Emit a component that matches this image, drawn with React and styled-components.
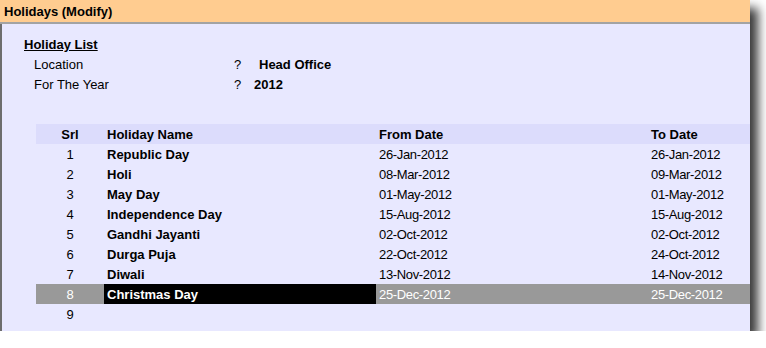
import React from "react";
import styled, { createGlobalStyle } from "styled-components";

const GlobalStyle = createGlobalStyle`
  html, body { margin: 0; padding: 0; background: #ffffff; }
  body { font-family: "Liberation Sans", Arial, sans-serif; }
  *, *::before, *::after { box-sizing: border-box; }
`;

const Window = styled.div`
  width: 750px;
  height: 331px;
  display: flex;
  flex-direction: column;
  background: #e8e8ff;
  box-shadow: 8px 8px 10px rgba(0, 0, 0, 0.78);
  font-size: 13px;
  color: #000;
`;

const TitleBar = styled.div`
  height: 24px;
  flex: 0 0 auto;
  background: #ffcc90;
  border-bottom: 2px solid #a3a3a3;
  padding: 3px 0 0 4px;
  line-height: 18px;
  font-weight: bold;
`;

const Body = styled.div`
  flex: 1;
  border-left: 2px solid #6d6d6d;
  padding: 10px 0 0 0;
  display: flex;
  flex-direction: column;
`;

const SectionTitle = styled.div`
  height: 20px;
  line-height: 18px;
  padding: 2px 0 0 22px;
  font-weight: bold;
  text-decoration: underline;
`;

const InfoRow = styled.div`
  height: 20px;
  line-height: 18px;
  padding-top: 2px;
  display: grid;
  grid-template-columns: 200px ${(p) => p.$valueOffset}px auto;
  padding-left: 32px;
`;

const Label = styled.span``;
const Question = styled.span``;
const Value = styled.span`
  font-weight: bold;
`;

const Table = styled.div`
  margin: 30px 0 0 34px;
  display: flex;
  flex-direction: column;
`;

const Row = styled.div`
  height: 20px;
  line-height: 18px;
  display: grid;
  grid-template-columns: 68px 272px 272px 1fr;
  background: ${(p) => (p.$header ? "#dcdcfc" : p.$selected ? "#999999" : "transparent")};
  color: ${(p) => (p.$selected ? "#ffffff" : "#000000")};
  font-weight: ${(p) => (p.$header ? "bold" : "normal")};
`;

const SrlCell = styled.div`
  padding-top: 2px;
  text-align: center;
`;

const NameCell = styled.div`
  padding: 2px 0 0 3px;
  font-weight: bold;
  background: ${(p) => (p.$highlight ? "#000000" : "transparent")};
`;

const DateCell = styled.div`
  padding: 2px 0 0 3px;
  letter-spacing: ${(p) => (p.$header ? "0" : "-0.35px")};
`;

const holidays = [
  ["Republic Day", "26-Jan-2012", "26-Jan-2012"],
  ["Holi", "08-Mar-2012", "09-Mar-2012"],
  ["May Day", "01-May-2012", "01-May-2012"],
  ["Independence Day", "15-Aug-2012", "15-Aug-2012"],
  ["Gandhi Jayanti", "02-Oct-2012", "02-Oct-2012"],
  ["Durga Puja", "22-Oct-2012", "24-Oct-2012"],
  ["Diwali", "13-Nov-2012", "14-Nov-2012"],
  ["Christmas Day", "25-Dec-2012", "25-Dec-2012"],
];

export default function App() {
  const selected = 7;
  return (
    <>
      <GlobalStyle />
      <Window>
        <TitleBar>Holidays (Modify)</TitleBar>
        <Body>
          <SectionTitle>Holiday List</SectionTitle>
          <InfoRow $valueOffset={25}>
            <Label>Location</Label>
            <Question>?</Question>
            <Value>Head Office</Value>
          </InfoRow>
          <InfoRow $valueOffset={20}>
            <Label>For The Year</Label>
            <Question>?</Question>
            <Value>2012</Value>
          </InfoRow>
          <Table>
            <Row $header>
              <SrlCell>Srl</SrlCell>
              <NameCell>Holiday Name</NameCell>
              <DateCell $header>From Date</DateCell>
              <DateCell $header>To Date</DateCell>
            </Row>
            {holidays.map(([name, from, to], i) => (
              <Row key={i} $selected={i === selected}>
                <SrlCell>{i + 1}</SrlCell>
                <NameCell $highlight={i === selected}>{name}</NameCell>
                <DateCell>{from}</DateCell>
                <DateCell>{to}</DateCell>
              </Row>
            ))}
            <Row>
              <SrlCell>{holidays.length + 1}</SrlCell>
              <NameCell />
              <DateCell />
              <DateCell />
            </Row>
          </Table>
        </Body>
      </Window>
    </>
  );
}
